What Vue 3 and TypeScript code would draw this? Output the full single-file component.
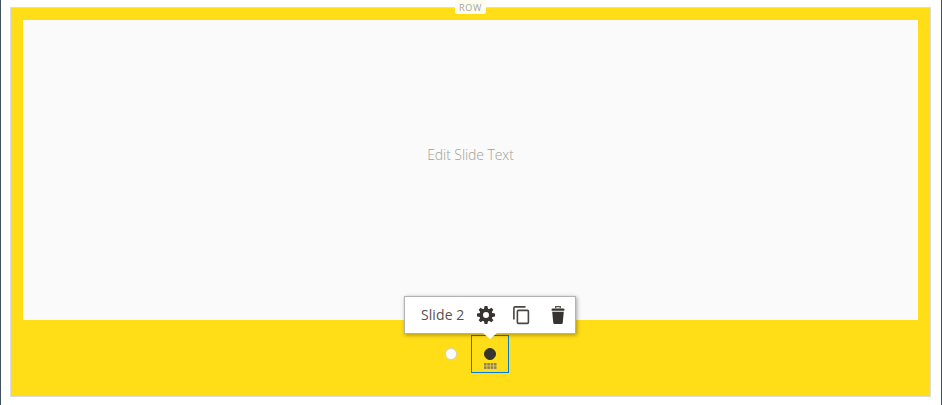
<script setup lang="ts">
import { ref } from 'vue'

interface Slide {
  id: number
  name: string
}

const slides: Slide[] = [
  { id: 1, name: 'Slide 1' },
  { id: 2, name: 'Slide 2' },
]
const active = ref(2)
const gearTeeth = [0, 45, 90, 135, 180, 225, 270, 315]
</script>

<template>
  <main class="stage">
    <section class="row">
      <span class="row-label">ROW</span>
      <div class="slide">
        <span class="placeholder">Edit Slide Text</span>
      </div>
      <nav class="dots">
        <div
          v-for="slide in slides"
          :key="slide.id"
          class="dot-box"
          :class="{ selected: slide.id === active }"
          @click="active = slide.id"
        >
          <span class="dot"></span>
          <template v-if="slide.id === active">
            <svg class="handle" width="13" height="6" viewBox="0 0 13 6">
              <template v-for="r in 2" :key="r">
                <rect
                  v-for="c in 4"
                  :key="c"
                  :x="(c - 1) * 3.3"
                  :y="(r - 1) * 3.3"
                  width="2.6"
                  height="2.6"
                />
              </template>
            </svg>
            <div class="toolbar">
              <span class="name">{{ slide.name }}</span>
              <svg class="gear" width="18" height="18" viewBox="0 0 18 18">
                <path
                  v-for="angle in gearTeeth"
                  :key="angle"
                  d="M6.7 4.2 7.6 0H10.4L11.3 4.2Z"
                  :transform="`rotate(${angle} 9 9)`"
                />
                <circle cx="9" cy="9" r="4.8" class="ring" />
              </svg>
              <svg class="copy" width="17" height="19" viewBox="0 0 17 19">
                <path d="M.9 13.5V2Q.9 .9 2 .9H12.5" />
                <rect x="4.4" y="4.4" width="11" height="13" rx="1" />
              </svg>
              <svg class="trash" width="14" height="18" viewBox="0 0 14 18">
                <path d="M.7 4.7V3.3Q.7 2.4 1.7 2.4H12.3Q13.3 2.4 13.3 3.3V4.7Z" />
                <path d="M1.2 5.7H12.8L11.7 17Q11.6 18 10.6 18H3.4Q2.4 18 2.3 17Z" />
                <path d="M4.7 2.3V.7H9.3V2.3" class="lid" />
              </svg>
            </div>
          </template>
        </div>
      </nav>
    </section>
  </main>
</template>

<style>
body {
  background: #fff;
}
</style>

<style scoped>
.stage {
  box-sizing: border-box;
  height: 405px;
  padding: 7px 10px 8px 9px;
  border-left: 1px solid #41525e;
  border-right: 1px solid #41525e;
  overflow: hidden;
  font-family: 'Open Sans', sans-serif;
}
.row {
  position: relative;
  box-sizing: border-box;
  height: 390px;
  padding: 12px;
  border: 1px solid #dcdcdc;
  background: #ffdd17;
}
.row-label {
  position: absolute;
  top: -8px;
  left: 444px;
  width: 31px;
  height: 14px;
  border-radius: 2px;
  background: #fffdf0;
  color: #a3a3a3;
  font-size: 9px;
  line-height: 15px;
  letter-spacing: 0.7px;
  text-align: center;
}
.slide {
  display: flex;
  align-items: center;
  justify-content: center;
  box-sizing: border-box;
  height: 300px;
  padding-bottom: 30px;
  background: #fafafa;
}
.placeholder {
  color: #a19e97;
  font-size: 14px;
  font-weight: 300;
  line-height: 20px;
  letter-spacing: -0.08px;
}
.dots {
  display: flex;
  justify-content: center;
  gap: 1px;
  padding-top: 15px;
}
.dot-box {
  position: relative;
  display: flex;
  align-items: center;
  justify-content: center;
  box-sizing: border-box;
  width: 38px;
  height: 38px;
  border: 1px solid transparent;
}
.selected {
  border-color: #007bdb;
}
.dot {
  box-sizing: border-box;
  width: 12px;
  height: 12px;
  border: 1px solid #d1d1d1;
  border-radius: 50%;
  background: #fff;
}
.selected .dot {
  border-color: #373330;
  background: #373330;
}
.handle {
  position: absolute;
  left: 12px;
  bottom: 3px;
  fill: #8b8068;
}
.toolbar {
  position: absolute;
  left: -68px;
  bottom: 38px;
  display: flex;
  align-items: center;
  box-sizing: border-box;
  width: 172px;
  height: 38px;
  padding-left: 16px;
  border: 1px solid #b2b2b2;
  background: #fff;
  box-shadow: 1px 1px 4px rgba(0, 0, 0, 0.35);
}
.toolbar::after {
  content: '';
  position: absolute;
  left: 78px;
  top: 36px;
  border: 7px solid transparent;
  border-top: 6px solid #fff;
  border-bottom: 0;
}
.name {
  width: 55.5px;
  color: #5a514b;
  font-size: 14px;
  line-height: 20px;
  letter-spacing: 0.08px;
  white-space: nowrap;
}
.toolbar svg {
  flex: none;
  fill: #373330;
}
.gear .ring {
  fill: none;
  stroke: #373330;
  stroke-width: 3.6;
}
.toolbar .copy {
  margin-left: 18px;
  fill: none;
  stroke: #4a4643;
  stroke-width: 1.6;
}
.trash {
  margin-left: 21px;
}
.trash .lid {
  fill: none;
  stroke: #5a5653;
  stroke-width: 1.3;
}
</style>
